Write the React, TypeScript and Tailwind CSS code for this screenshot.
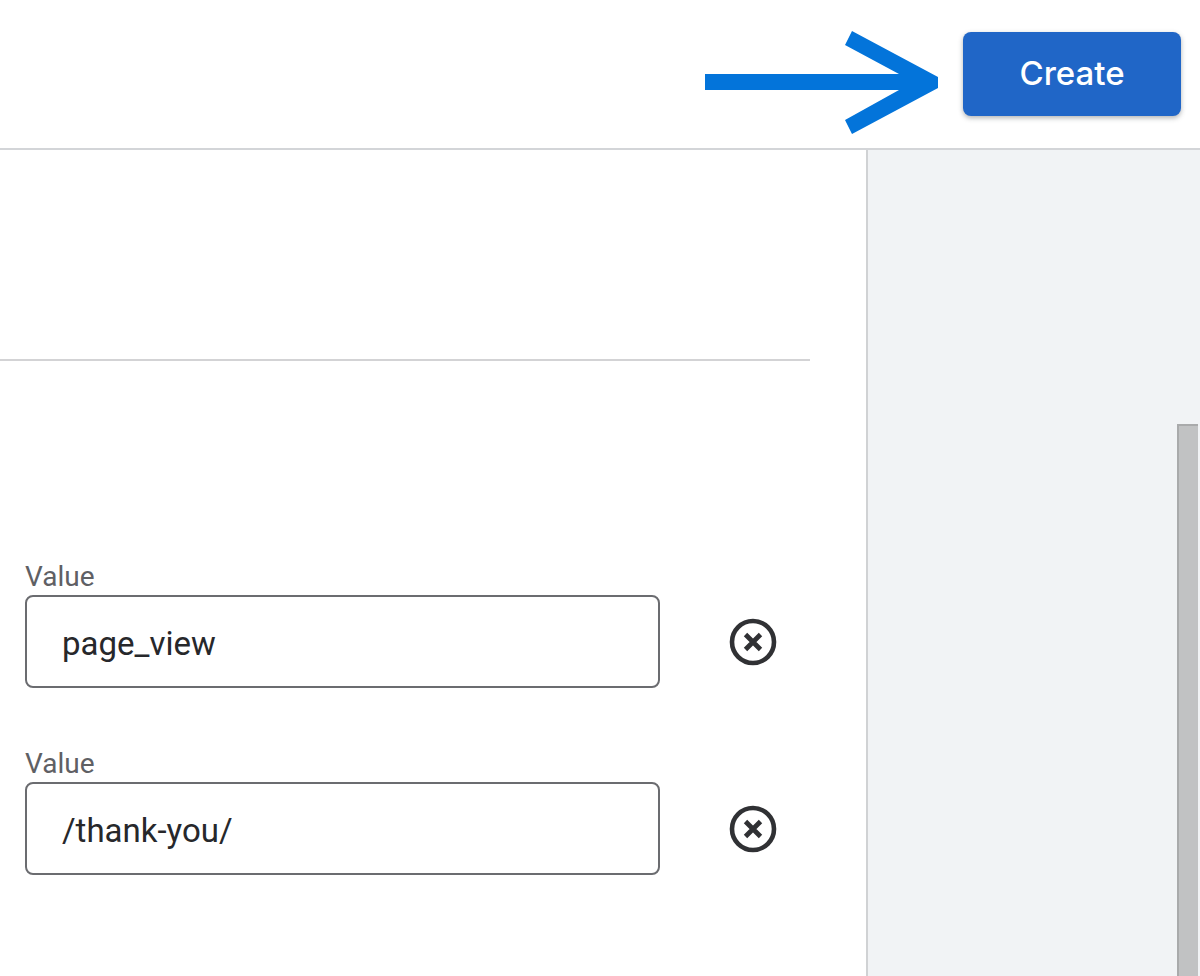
import React, { useState } from 'react';

interface Condition {
  id: string;
  value: string;
}

const initialConditions: Condition[] = [
  { id: 'condition-1', value: 'page_view' },
  { id: 'condition-2', value: '/thank-you/' },
];

const ArrowHint = () => (
  <svg viewBox="0 0 234 120" className="h-[120px] w-[234px] shrink-0 fill-[#0374da]" aria-hidden="true">
    <path d="M0 60H194L140 31L147 17L233 63V74L147 120L140 106L194 76H0Z" />
  </svg>
);

const RemoveIcon = () => (
  <svg viewBox="0 0 48 48" className="h-12 w-12" fill="none" stroke="#303134" aria-hidden="true">
    <circle cx="24" cy="24" r="21" strokeWidth="4.6" />
    <path d="M16.5 16.5L31.5 31.5M31.5 16.5L16.5 31.5" strokeWidth="4.8" />
  </svg>
);

const App: React.FC = () => {
  const [conditions, setConditions] = useState(initialConditions);

  const updateValue = (id: string, value: string) => {
    setConditions(prev => prev.map(c => (c.id === id ? { ...c, value } : c)));
  };

  const removeCondition = (id: string) => {
    setConditions(prev => prev.filter(c => c.id !== id));
  };

  return (
    <div className="flex min-h-screen flex-col bg-white font-['Roboto',sans-serif]">
      <header className="flex h-[150px] items-center justify-end gap-6 border-b-2 border-[#d3d5d8] pr-[19px]">
        <ArrowHint />
        <button
          type="button"
          className="h-[84px] w-[218px] rounded-lg bg-[#2066c7] font-['Inter',sans-serif] text-[33px] font-medium text-white shadow-[0_2px_5px_rgba(60,64,67,0.4)]"
        >
          Create
        </button>
      </header>

      <div className="flex flex-1">
        <main className="flex-1 pr-14">
          <div className="h-[211px] border-b-2 border-[#d3d3d5]" />

          <div className="flex flex-col gap-[58px] pt-[198px] pl-[25px]">
            {conditions.map(condition => (
              <div key={condition.id} className="flex items-end justify-between pr-[33px]">
                <div className="mr-[69px] flex flex-1 flex-col">
                  <label htmlFor={condition.id} className="text-[28px] leading-9 text-[#5f6064]">Value</label>
                  <input
                    id={condition.id}
                    type="text"
                    value={condition.value}
                    onChange={e => updateValue(condition.id, e.target.value)}
                    className="h-[93px] w-full rounded-lg border-2 border-[#6b6c70] bg-white px-[35px] pt-1 text-[33px] text-[#27282b] outline-none"
                  />
                </div>
                <button
                  type="button"
                  aria-label="Remove condition"
                  onClick={() => removeCondition(condition.id)}
                  className="flex h-[93px] items-center"
                >
                  <RemoveIcon />
                </button>
              </div>
            ))}
          </div>
        </main>

        <aside className="flex w-[334px] justify-end border-l-2 border-[#d0d2d4] bg-[#f1f3f5] pt-[274px] pr-0.5">
          <div className="w-[21px] border-t-2 border-l-2 border-t-[#a9aaab] border-l-[#a9aaab] bg-[#c1c2c3]" />
        </aside>
      </div>
    </div>
  );
};

export default App;
